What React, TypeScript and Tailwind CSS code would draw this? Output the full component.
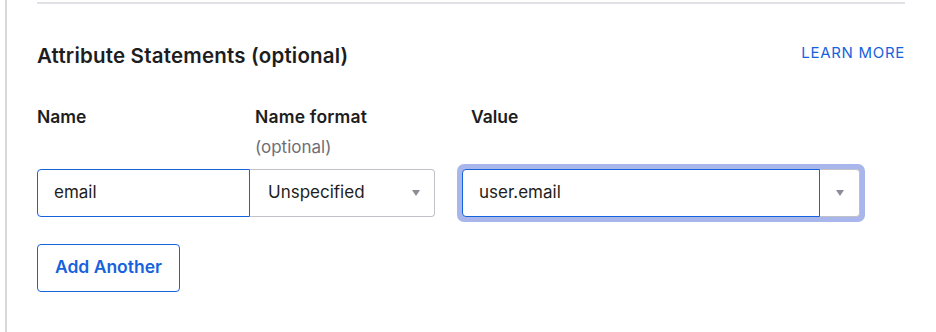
import React from 'react';

const Caret = () => (
  <svg width="8" height="6" viewBox="0 0 8 6" className="fill-[#8c8c96]">
    <path d="M0 0 L8 0 L4 6 Z" />
  </svg>
);

export default function App() {
  return (
    <div className="h-[332px] w-[936px] bg-white font-['Inter',sans-serif] text-[#1d1d21]">
      <div className="ml-[5px] h-full border-l-2 border-[#d7d7dc] pl-[29px] pr-[31px]">
        <div className="ml-[1px] h-[2px] translate-y-[2px] bg-[#e1e1e5]" />
        <div className="ml-[1px] flex items-center justify-between pt-[39px]">
          <h2 className="text-[20.5px] font-semibold tracking-[0.2px]">Attribute Statements (optional)</h2>
          <a className="-mt-[6px] text-[15px] tracking-[0.7px] text-[#1662dd]">LEARN MORE</a>
        </div>

        <div className="ml-[1px] mt-[32px] flex">
          <div className="w-[212px]">
            <div className="text-[17.5px] font-semibold">Name</div>
          </div>
          <div className="w-[216px] pl-[6px]">
            <div className="text-[17.5px] font-semibold tracking-[0.2px]">Name format</div>
            <div className="mt-[5px] text-[17px] text-[#6e6e78]">(optional)</div>
          </div>
          <div>
            <div className="pl-[6px] text-[17.5px] font-semibold">Value</div>
          </div>
        </div>

        <div className="ml-[1px] mt-[3px] flex items-center">
          <div className="flex h-[48px] w-[213px] items-center rounded-l-[4px] border border-[#1662dd] px-[16px] pt-[1px] text-[17px]">
            email
          </div>
          <div className="flex h-[48px] w-[185px] items-center justify-between rounded-r-[4px] border border-l-0 border-[#c1c1c8] pl-[18px] pr-[14px] pt-[1px] text-[17px]">
            <span>Unspecified</span>
            <Caret />
          </div>
          <div className="ml-[22px] flex h-[58px] rounded-[7px] bg-[#a8b6ec] p-[5px]">
            <div className="flex h-[48px] w-[358px] items-center rounded-l-[4px] border border-[#1662dd] bg-white px-[16px] pt-[1px] text-[17px]">
              user.email
            </div>
            <div className="flex h-[48px] w-[40px] items-center justify-center rounded-r-[4px] border border-l-0 border-[#c1c1c8] bg-white">
              <Caret />
            </div>
          </div>
        </div>

        <button className="ml-[1px] mt-[22px] flex h-[48px] w-[143px] items-center justify-center rounded-[4px] border border-[#1662dd] text-[17.5px] font-semibold text-[#1662dd]">
          Add Another
        </button>
      </div>
    </div>
  );
}
